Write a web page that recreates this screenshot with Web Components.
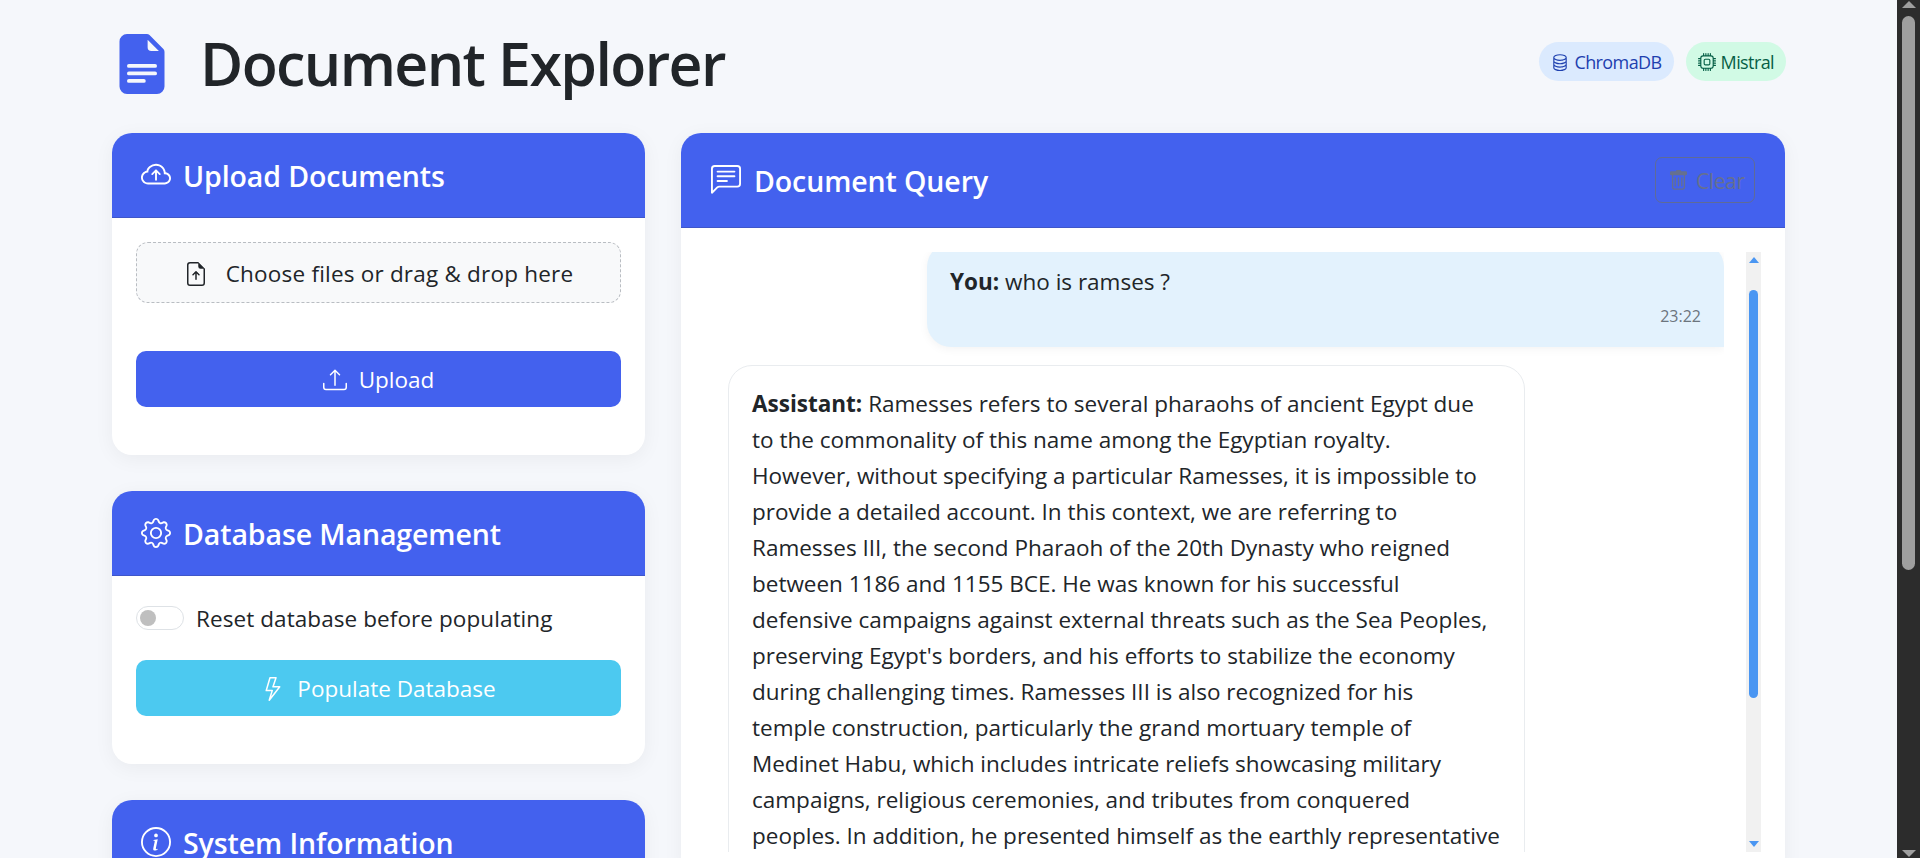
<!DOCTYPE html>
<html lang="en">
<head>
<meta charset="utf-8">
<title>Document Explorer</title>
<style>
html, body { margin: 0; height: 100%; overflow: hidden; }
body {
  background: #f5f7fb;
  color: #212529;
  font-family: "Open Sans", "Noto Sans", "Liberation Sans", sans-serif;
  font-size: 23px;
}
</style>
</head>
<body>
<app-shell>
  <page-header title-text="Document Explorer">
    <info-badge icon="database" tone="blue">ChromaDB</info-badge>
    <info-badge icon="cpu" tone="green">Mistral</info-badge>
  </page-header>
  <div slot="left">
    <panel-card icon="cloud-arrow-up" heading="Upload Documents">
      <drop-zone>Choose files or drag &amp; drop here</drop-zone>
      <action-button icon="upload" style="margin-top:48px">Upload</action-button>
    </panel-card>
    <panel-card icon="gear" heading="Database Management">
      <toggle-row>Reset database before populating</toggle-row>
      <action-button icon="lightning" tone="info" style="margin-top:24px">Populate Database</action-button>
    </panel-card>
    <panel-card icon="info-circle" heading="System Information"></panel-card>
  </div>
  <panel-card slot="right" icon="chat-left-text" heading="Document Query" flush>
    <clear-button slot="action">Clear</clear-button>
    <chat-log>
      <chat-message role="user" who="You" time="23:22">who is ramses ?</chat-message>
      <chat-message role="assistant" who="Assistant">Ramesses refers to several pharaohs of ancient Egypt due<br>to the commonality of this name among the Egyptian royalty.<br>However, without specifying a particular Ramesses, it is impossible to<br>provide a detailed account. In this context, we are referring to<br>Ramesses III, the second Pharaoh of the 20th Dynasty who reigned<br>between 1186 and 1155 BCE. He was known for his successful<br>defensive campaigns against external threats such as the Sea Peoples,<br>preserving Egypt's borders, and his efforts to stabilize the economy<br>during challenging times. Ramesses III is also recognized for his<br>temple construction, particularly the grand mortuary temple of<br>Medinet Habu, which includes intricate reliefs showcasing military<br>campaigns, religious ceremonies, and tributes from conquered<br>peoples. In addition, he presented himself as the earthly representative</chat-message>
    </chat-log>
  </panel-card>
</app-shell>

<script>
// bootstrap-icons paths, 16x16 box
const ICONS = {
  "file-text-fill": "M9.293 0H4a2 2 0 0 0-2 2v12a2 2 0 0 0 2 2h8a2 2 0 0 0 2-2V4.707A1 1 0 0 0 13.707 4L10 .293A1 1 0 0 0 9.293 0zM9.5 3.5v-2l3 3h-2a1 1 0 0 1-1-1zM4.5 9a.5.5 0 0 1 0-1h7a.5.5 0 0 1 0 1h-7zM4 10.5a.5.5 0 0 1 .5-.5h7a.5.5 0 0 1 0 1h-7a.5.5 0 0 1-.5-.5zm.5 2.5a.5.5 0 0 1 0-1h4a.5.5 0 0 1 0 1h-4z",
  "cloud-arrow-up": "M7.646 5.146a.5.5 0 0 1 .708 0l2 2a.5.5 0 0 1-.708.708L8.5 6.707V10.5a.5.5 0 0 1-1 0V6.707L6.354 7.854a.5.5 0 1 1-.708-.708l2-2z M4.406 3.342A5.53 5.53 0 0 1 8 2c2.69 0 4.923 2 5.166 4.579C14.758 6.804 16 8.137 16 9.773 16 11.569 14.502 13 12.687 13H3.781C1.708 13 0 11.366 0 9.318c0-1.763 1.266-3.223 2.942-3.593.143-.863.698-1.723 1.464-2.383zm.653.757c-.757.653-1.153 1.44-1.153 2.056v.448l-.445.049C2.064 6.805 1 7.952 1 9.318 1 10.785 2.23 12 3.781 12h8.906C13.98 12 15 10.988 15 9.773c0-1.216-1.02-2.228-2.313-2.228h-.5v-.5C12.188 4.825 10.328 3 8 3a4.53 4.53 0 0 0-2.941 1.1z",
  "chat-left-text": "M14 1a1 1 0 0 1 1 1v8a1 1 0 0 1-1 1H4.414A2 2 0 0 0 3 11.586l-2 2V2a1 1 0 0 1 1-1h12zM2 0a2 2 0 0 0-2 2v12.793a.5.5 0 0 0 .854.353l2.853-2.853A1 1 0 0 1 4.414 12H14a2 2 0 0 0 2-2V2a2 2 0 0 0-2-2H2z M3 3.5a.5.5 0 0 1 .5-.5h9a.5.5 0 0 1 0 1h-9a.5.5 0 0 1-.5-.5zM3 6a.5.5 0 0 1 .5-.5h9a.5.5 0 0 1 0 1h-9A.5.5 0 0 1 3 6zm0 2.5a.5.5 0 0 1 .5-.5h5a.5.5 0 0 1 0 1h-5a.5.5 0 0 1-.5-.5z",
  "file-arrow-up": "M8.5 11.5a.5.5 0 0 1-1 0V7.707L6.354 8.854a.5.5 0 1 1-.708-.708l2-2a.5.5 0 0 1 .708 0l2 2a.5.5 0 0 1-.708.708L8.5 7.707V11.5z M14 14V4.5L9.5 0H4a2 2 0 0 0-2 2v12a2 2 0 0 0 2 2h8a2 2 0 0 0 2-2zM9.5 3A1.5 1.5 0 0 0 11 4.5h2V14a1 1 0 0 1-1 1H4a1 1 0 0 1-1-1V2a1 1 0 0 1 1-1h5.5v2z",
  "upload": "M.5 9.9a.5.5 0 0 1 .5.5v2.5a1 1 0 0 0 1 1h12a1 1 0 0 0 1-1v-2.5a.5.5 0 0 1 1 0v2.5a2 2 0 0 1-2 2H2a2 2 0 0 1-2-2v-2.5a.5.5 0 0 1 .5-.5z M7.646 1.146a.5.5 0 0 1 .708 0l3 3a.5.5 0 0 1-.708.708L8.5 2.707V11.5a.5.5 0 0 1-1 0V2.707L5.354 4.854a.5.5 0 1 1-.708-.708l3-3z",
  "gear": "M8 4.754a3.246 3.246 0 1 0 0 6.492 3.246 3.246 0 0 0 0-6.492zM5.754 8a2.246 2.246 0 1 1 4.492 0 2.246 2.246 0 0 1-4.492 0z M9.796 1.343c-.527-1.79-3.065-1.79-3.592 0l-.094.319a.873.873 0 0 1-1.255.52l-.292-.16c-1.64-.892-3.433.902-2.54 2.541l.159.292a.873.873 0 0 1-.52 1.255l-.319.094c-1.79.527-1.79 3.065 0 3.592l.319.094a.873.873 0 0 1 .52 1.255l-.16.292c-.892 1.64.901 3.434 2.541 2.54l.292-.159a.873.873 0 0 1 1.255.52l.094.319c.527 1.79 3.065 1.79 3.592 0l.094-.319a.873.873 0 0 1 1.255-.52l.292.16c1.64.893 3.434-.902 2.54-2.541l-.159-.292a.873.873 0 0 1 .52-1.255l.319-.094c1.79-.527 1.79-3.065 0-3.592l-.319-.094a.873.873 0 0 1-.52-1.255l.16-.292c.893-1.64-.902-3.433-2.541-2.54l-.292.159a.873.873 0 0 1-1.255-.52l-.094-.319zm-2.633.283c.246-.835 1.428-.835 1.674 0l.094.319a1.873 1.873 0 0 0 2.693 1.115l.291-.16c.764-.415 1.6.42 1.184 1.185l-.159.292a1.873 1.873 0 0 0 1.116 2.692l.318.094c.835.246.835 1.428 0 1.674l-.319.094a1.873 1.873 0 0 0-1.115 2.693l.16.291c.415.764-.42 1.6-1.185 1.184l-.291-.159a1.873 1.873 0 0 0-2.693 1.116l-.094.318c-.246.835-1.428.835-1.674 0l-.094-.319a1.873 1.873 0 0 0-2.692-1.115l-.292.16c-.764.415-1.6-.42-1.184-1.185l.159-.291A1.873 1.873 0 0 0 1.945 8.93l-.319-.094c-.835-.246-.835-1.428 0-1.674l.319-.094A1.873 1.873 0 0 0 3.06 4.377l-.16-.292c-.415-.764.42-1.6 1.185-1.184l.292.159a1.873 1.873 0 0 0 2.692-1.115l.094-.319z",
  "lightning": "M5.52.359A.5.5 0 0 1 6 0h4a.5.5 0 0 1 .474.658L8.694 6H12.5a.5.5 0 0 1 .395.807l-7 9a.5.5 0 0 1-.873-.454L6.823 9.5H3.5a.5.5 0 0 1-.48-.641l2.5-8.5zM6.374 1 4.168 8.5H7.5a.5.5 0 0 1 .478.647L6.78 13.04 11.478 7H8a.5.5 0 0 1-.474-.658L9.306 1H6.374z",
  "info-circle": "M8 15A7 7 0 1 1 8 1a7 7 0 0 1 0 14zm0 1A8 8 0 1 0 8 0a8 8 0 0 0 0 16z m.93-9.412-2.29.287-.082.38.45.083c.294.07.352.176.288.469l-.738 3.468c-.194.897.105 1.319.808 1.319.545 0 1.178-.252 1.465-.598l.088-.416c-.2.176-.492.246-.686.246-.275 0-.375-.193-.304-.533L8.93 6.588zM9 4.5a1 1 0 1 1-2 0 1 1 0 0 1 2 0z",
  "database": "M4.318 2.687C5.234 2.271 6.536 2 8 2s2.766.27 3.682.687C12.644 3.125 13 3.627 13 4c0 .374-.356.875-1.318 1.313C10.766 5.729 9.464 6 8 6s-2.766-.27-3.682-.687C3.356 4.875 3 4.373 3 4c0-.374.356-.875 1.318-1.313ZM13 5.698V7c0 .374-.356.875-1.318 1.313C10.766 8.729 9.464 9 8 9s-2.766-.27-3.682-.687C3.356 7.875 3 7.373 3 7V5.698c.271.202.58.378.904.525C4.978 6.711 6.427 7 8 7s3.022-.289 4.096-.777A4.92 4.92 0 0 0 13 5.698ZM14 4c0-1.007-.875-1.755-1.904-2.223C11.022 1.289 9.573 1 8 1s-3.022.289-4.096.777C2.875 2.245 2 2.993 2 4v9c0 1.007.875 1.755 1.904 2.223C4.978 15.71 6.427 16 8 16s3.022-.289 4.096-.777C13.125 14.755 14 14.007 14 13V4Zm-1 4.698V10c0 .374-.356.875-1.318 1.313C10.766 11.729 9.464 12 8 12s-2.766-.27-3.682-.687C3.356 10.875 3 10.373 3 10V8.698c.271.202.58.378.904.525C4.978 9.71 6.427 10 8 10s3.022-.289 4.096-.777A4.92 4.92 0 0 0 13 8.698Zm0 3V13c0 .374-.356.875-1.318 1.313C10.766 14.729 9.464 15 8 15s-2.766-.27-3.682-.687C3.356 13.875 3 13.373 3 13v-1.302c.271.202.58.378.904.525C4.978 12.71 6.427 13 8 13s3.022-.289 4.096-.777c.324-.147.633-.323.904-.525Z",
  "cpu": "M5 0a.5.5 0 0 1 .5.5V2h1V.5a.5.5 0 0 1 1 0V2h1V.5a.5.5 0 0 1 1 0V2h1V.5a.5.5 0 0 1 1 0V2A2.5 2.5 0 0 1 14 4.5h1.5a.5.5 0 0 1 0 1H14v1h1.5a.5.5 0 0 1 0 1H14v1h1.5a.5.5 0 0 1 0 1H14v1h1.5a.5.5 0 0 1 0 1H14a2.5 2.5 0 0 1-2.5 2.5v1.5a.5.5 0 0 1-1 0V14h-1v1.5a.5.5 0 0 1-1 0V14h-1v1.5a.5.5 0 0 1-1 0V14h-1v1.5a.5.5 0 0 1-1 0V14A2.5 2.5 0 0 1 2 11.5H.5a.5.5 0 0 1 0-1H2v-1H.5a.5.5 0 0 1 0-1H2v-1H.5a.5.5 0 0 1 0-1H2v-1H.5a.5.5 0 0 1 0-1H2A2.5 2.5 0 0 1 4.5 2V.5A.5.5 0 0 1 5 0zm-.5 3A1.5 1.5 0 0 0 3 4.5v7A1.5 1.5 0 0 0 4.5 13h7a1.5 1.5 0 0 0 1.5-1.5v-7A1.5 1.5 0 0 0 11.5 3h-7zM5 6.5A1.5 1.5 0 0 1 6.5 5h3A1.5 1.5 0 0 1 11 6.5v3A1.5 1.5 0 0 1 9.5 11h-3A1.5 1.5 0 0 1 5 9.5v-3zM6.5 6a.5.5 0 0 0-.5.5v3a.5.5 0 0 0 .5.5h3a.5.5 0 0 0 .5-.5v-3a.5.5 0 0 0-.5-.5h-3z",
  "trash": "M5.5 5.5A.5.5 0 0 1 6 6v6a.5.5 0 0 1-1 0V6a.5.5 0 0 1 .5-.5zm2.5 0a.5.5 0 0 1 .5.5v6a.5.5 0 0 1-1 0V6a.5.5 0 0 1 .5-.5zm3 .5a.5.5 0 0 0-1 0v6a.5.5 0 0 0 1 0V6z M14.5 3a1 1 0 0 1-1 1H13v9a2 2 0 0 1-2 2H5a2 2 0 0 1-2-2V4h-.5a1 1 0 0 1-1-1V2a1 1 0 0 1 1-1H6a1 1 0 0 1 1-1h2a1 1 0 0 1 1 1h3.5a1 1 0 0 1 1 1v1zM4.118 4 4 4.059V13a1 1 0 0 0 1 1h6a1 1 0 0 0 1-1V4.059L11.882 4H4.118zM2.5 3V2h11v1h-11z"
};

const svgIcon = (name, size) =>
  `<svg width="${size}" height="${size}" viewBox="0 0 16 16" fill="currentColor" style="flex:none;display:block"><path d="${ICONS[name]}"/></svg>`;

// small helper so every element below is just styles + markup
function define(tag, render) {
  customElements.define(tag, class extends HTMLElement {
    constructor() {
      super();
      this.attachShadow({ mode: "open" });
    }
    connectedCallback() {
      this.shadowRoot.innerHTML = render(this);
    }
  });
}

define("app-shell", () => `
  <style>
    :host { display: flex; height: 858px; overflow: hidden; }
    .page { flex: 1; min-width: 0; padding: 0 111px 0 112px; overflow: hidden; }
    .cols { display: grid; grid-template-columns: 533px 1104px; gap: 36px; }
    .bar { flex: none; width: 23px; background: #2c2c2c; display: flex; flex-direction: column; align-items: center; }
    .up, .down { width: 0; height: 0; border-left: 7px solid transparent; border-right: 7px solid transparent; }
    .up { border-bottom: 7px solid #9f9f9f; margin-top: 1px; }
    .down { border-top: 7px solid #9f9f9f; margin-bottom: 1px; }
    .thumb { width: 13px; height: 554px; margin-top: 8px; background: #9f9f9f; border-radius: 7px; }
    .gap { flex: 1; }
  </style>
  <div class="page">
    <slot></slot>
    <div class="cols">
      <div><slot name="left"></slot></div>
      <div><slot name="right"></slot></div>
    </div>
  </div>
  <div class="bar"><div class="up"></div><div class="thumb"></div><div class="gap"></div><div class="down"></div></div>
`);

define("page-header", (el) => `
  <style>
    :host { display: flex; align-items: center; justify-content: space-between; height: 133px; box-sizing: border-box; padding-bottom: 6px; }
    .brand { display: flex; align-items: center; color: #4361ee; }
    h1 { margin: -2px 0 0 28px; font-size: 59px; line-height: 72px; font-weight: 600; color: #212529; letter-spacing: -1.6px; white-space: nowrap; }
    .badges { display: flex; gap: 12px; margin-bottom: 4px; }
  </style>
  <div class="brand">${svgIcon("file-text-fill", 60)}<h1>${el.getAttribute("title-text")}</h1></div>
  <div class="badges"><slot></slot></div>
`);

define("info-badge", (el) => {
  const green = el.getAttribute("tone") === "green";
  return `
  <style>
    :host { display: flex; align-items: center; gap: 5px; height: 39px; padding: 0 12px; border-radius: 20px; font-size: 18px; letter-spacing: -.6px;
      background: ${green ? "#d1fae5" : "#dbeafe"}; color: ${green ? "#065f46" : "#1e40af"}; }
  </style>
  ${svgIcon(el.getAttribute("icon"), 18)}<slot></slot>`;
});

define("panel-card", (el) => {
  const flush = el.hasAttribute("flush");
  return `
  <style>
    :host { display: block; margin-bottom: 36px; background: #fff; border-radius: 20px; box-shadow: 0 4px 20px rgba(0,0,0,.05); overflow: hidden; }
    header { display: flex; align-items: center; justify-content: space-between; padding: 24px 30px 24px ${flush ? 30 : 29}px; background: #4361ee; border-bottom: 1px solid #3f56c9; color: #fff; }
    .title { display: flex; align-items: center; gap: ${flush ? 13 : 12}px; font-size: 28.5px; line-height: 34px; font-weight: 600; letter-spacing: -.1px; white-space: nowrap; }
    .title span { padding-top: 2px; }
    .body { padding: ${flush ? "24px" : "24px 24px 48px"}; }
  </style>
  <header>
    <div class="title">${svgIcon(el.getAttribute("icon"), 30)}<span>${el.getAttribute("heading")}</span></div>
    <slot name="action"></slot>
  </header>
  <div class="body"><slot></slot></div>
`;
});

define("drop-zone", () => `
  <style>
    :host { display: flex; align-items: center; justify-content: center; gap: 18px; height: 61px; box-sizing: border-box; padding-top: 2px; background: #f8f9fa; border: 1px dashed #b9bdc2; border-radius: 12px; font-size: 22.5px; letter-spacing: .2px; color: #212529; }
  </style>
  ${svgIcon("file-arrow-up", 24)}<slot></slot>
`);

define("action-button", (el) => `
  <style>
    :host { display: flex; align-items: center; justify-content: center; gap: 12px; height: 56px; box-sizing: border-box; padding-top: 1px; border-radius: 10px; color: #fff; font-size: 22.5px;
      background: ${el.getAttribute("tone") === "info" ? "#4cc9f0" : "#4361ee"}; }
  </style>
  ${svgIcon(el.getAttribute("icon"), 24)}<slot></slot>
`);

define("toggle-row", () => `
  <style>
    :host { display: flex; align-items: center; gap: 12px; height: 36px; font-size: 22.5px; letter-spacing: .08px; color: #212529; white-space: nowrap; }
    .track { width: 48px; height: 24px; box-sizing: border-box; border: 1px solid #dee2e6; border-radius: 12px; background: #fff; display: flex; align-items: center; padding-left: 3px; margin-top: -1px; }
    .knob { width: 16px; height: 16px; border-radius: 50%; background: #bfbfbf; }
    span { line-height: 30px; padding-top: 2px; }
  </style>
  <div class="track"><div class="knob"></div></div><span><slot></slot></span>
`);

define("clear-button", () => `
  <style>
    :host { display: flex; align-items: center; gap: 7px; height: 46px; width: 100px; box-sizing: border-box; padding-left: 12px; border: 1px solid #5f6b97; border-radius: 7px; color: #66708f; font-size: 21px; letter-spacing: -.4px; }
    span { padding-top: 2px; }
  </style>
  ${svgIcon("trash", 21)}<span><slot></slot></span>
`);

define("chat-log", () => `
  <style>
    :host { display: flex; height: 600px; overflow: hidden; }
    .list { flex: 1; min-width: 0; overflow: hidden; }
    .inner { display: flex; flex-direction: column; gap: 18px; margin-top: -9px; padding-left: 23px; }
    .track { flex: none; width: 15px; margin-left: 22px; background: #f1f1f1; display: flex; flex-direction: column; align-items: center; }
    .up, .down { width: 0; height: 0; border-left: 5px solid transparent; border-right: 5px solid transparent; }
    .up { border-bottom: 6px solid #4a96f2; margin-top: 5px; }
    .down { border-top: 6px solid #4a96f2; margin-bottom: 5px; }
    .thumb { width: 9px; height: 408px; margin-top: 27px; background: #4a96f2; border-radius: 5px; }
    .gap { flex: 1; }
  </style>
  <div class="list"><div class="inner"><slot></slot></div></div>
  <div class="track"><div class="up"></div><div class="thumb"></div><div class="gap"></div><div class="down"></div></div>
`);

define("chat-message", (el) => {
  const user = el.getAttribute("role") === "user";
  const time = el.getAttribute("time");
  return `
  <style>
    :host { display: block; box-sizing: border-box; width: 797px; font-size: 22.5px; line-height: 36px; color: #212529; white-space: nowrap;
      ${user
        ? "align-self: flex-end; padding: 21px 23px 0; background: #e3f2fd; border-radius: 24px 24px 0 24px; box-shadow: 0 2px 10px rgba(0,0,0,.05); height: 104px;"
        : "align-self: flex-start; padding: 20px 23px 23px; background: #fff; border: 1px solid #e9ecef; border-radius: 24px;"}
    }
    b { font-weight: 700; }
    .time { text-align: right; font-size: 16px; line-height: 20px; margin-top: 6px; color: #6c757d; }
  </style>
  <b>${el.getAttribute("who")}:</b> <slot></slot>
  ${time ? `<div class="time">${time}</div>` : ""}`;
});
</script>
</body>
</html>
